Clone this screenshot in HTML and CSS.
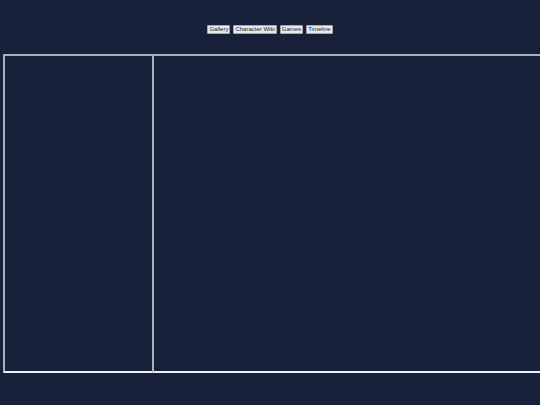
FILE: index.html
```html
<!DOCTYPE html>
<html lang="en">
<head>
<meta charset="utf-8">
<title>Wiki</title>
<link rel="stylesheet" href="styles.css">
</head>
<body>
<nav class="nav">
  <button class="nav-btn">Gallery</button>
  <button class="nav-btn">Character Wiki</button>
  <button class="nav-btn">Games</button>
  <button class="nav-btn">Timeline</button>
</nav>
<main class="frames">
  <div class="frame frame-side"></div>
  <div class="frame frame-main"></div>
</main>
</body>
</html>
```
FILE: styles.css
```css
html, body {
  margin: 0;
  padding: 0;
  overflow: hidden;
  background: #17223a;
  width: 540px;
  height: 405px;
}
body {
  font-family: "Liberation Sans", Arial, sans-serif;
  color: #ffffff;
}
.nav {
  display: flex;
  justify-content: center;
  gap: 3px;
  padding-top: 25px;
  height: 9px;
}
.nav-btn {
  font-family: "Liberation Sans", Arial, sans-serif;
  font-size: 6px;
  line-height: 7px;
  height: 9px;
  padding: 0 1px;
  margin: 0;
  border: 1px solid #a3a3a8;
  border-radius: 1px;
  background: #e9e9ed;
  color: #222;
}
.frames {
  display: flex;
  margin-top: 20px;
  padding-left: 3px;
}
.frame {
  flex: none;
  box-sizing: border-box;
  height: 319px;
  border: 2px solid;
  border-color: #a9afb8 #eef0f3 #eef0f3 #a9afb8;
}
.frame-side {
  width: 151px;
}
.frame-main {
  width: 420px;
  margin-left: -2px;
}
```
